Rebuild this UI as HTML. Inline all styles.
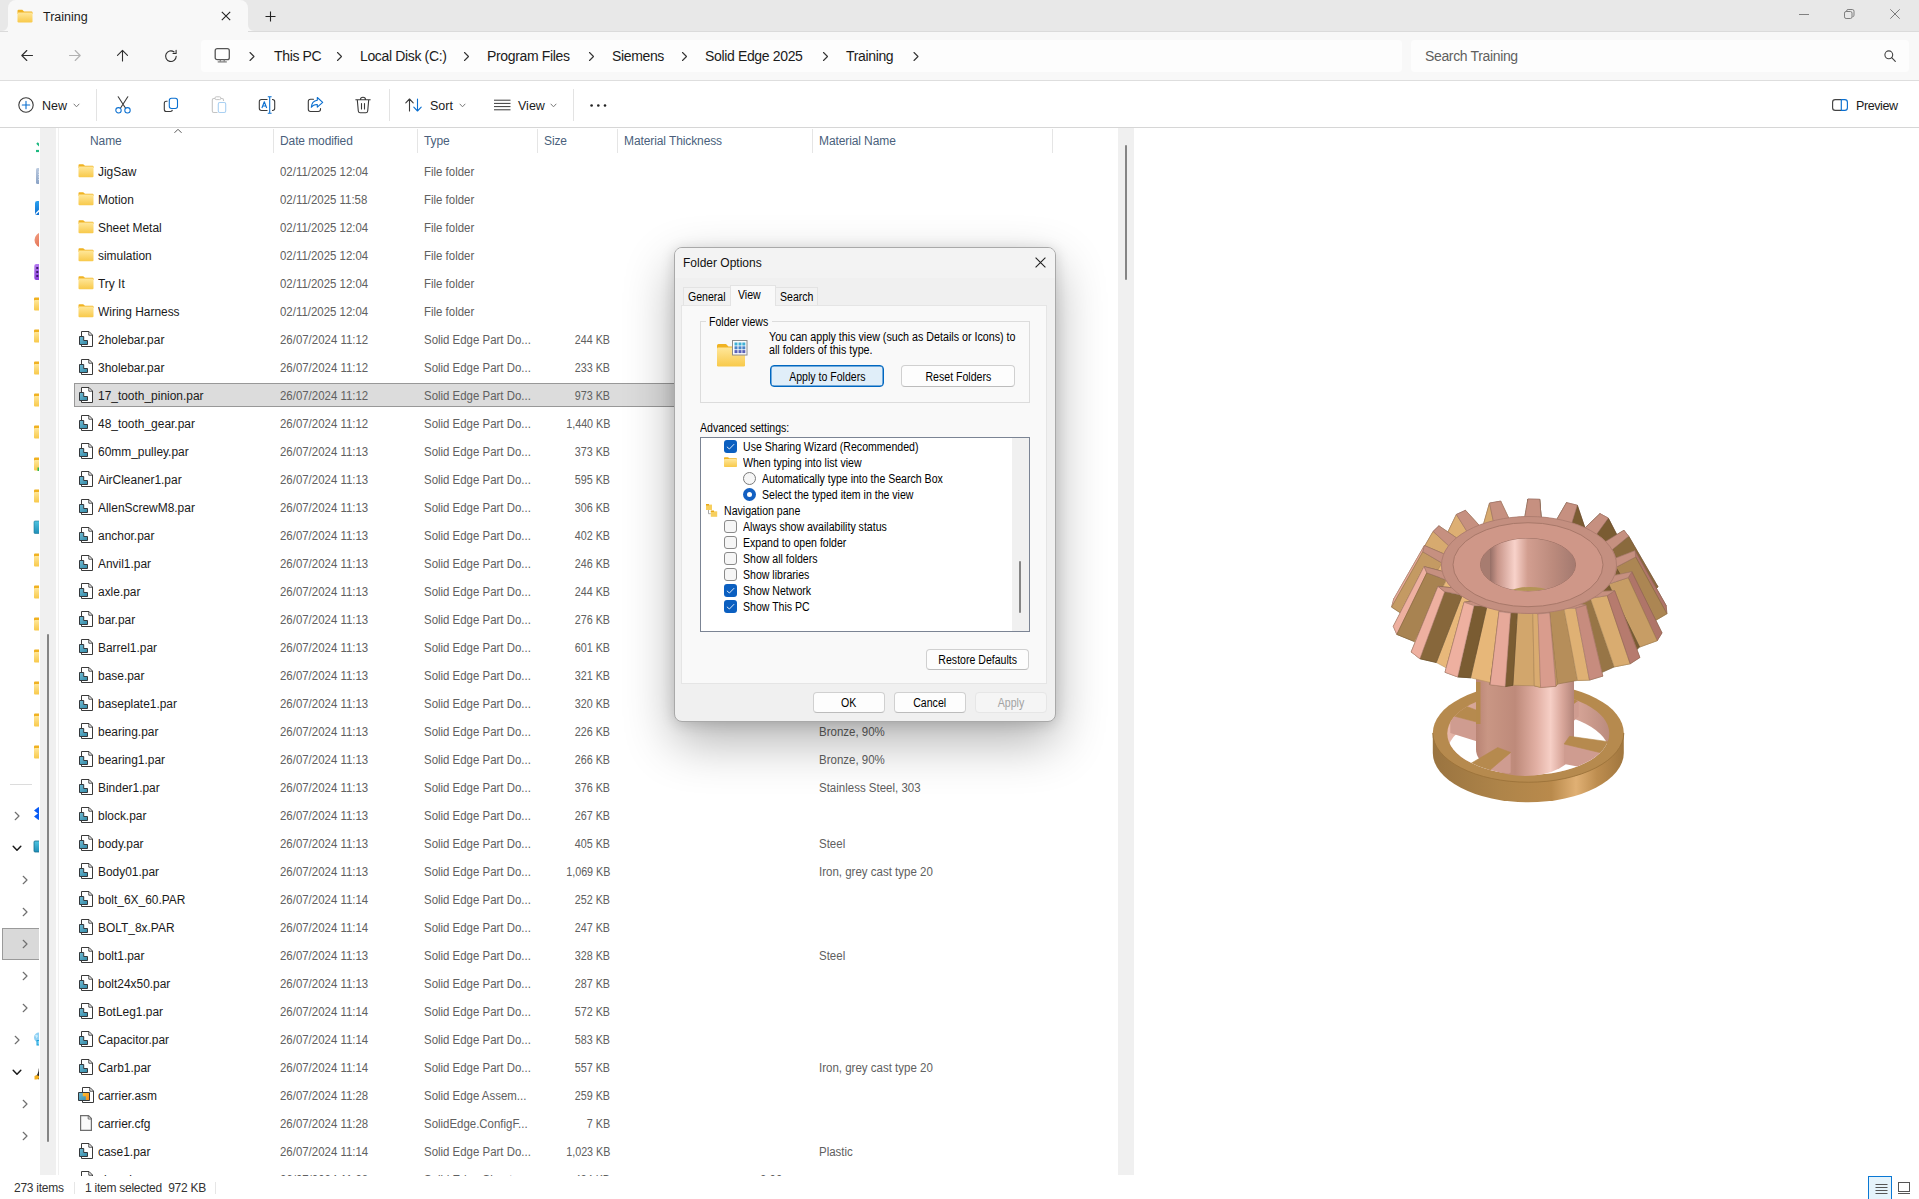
<!DOCTYPE html>
<html lang="en"><head><meta charset="utf-8"><title>Training - File Explorer</title>
<style>
*{box-sizing:border-box}
html,body{margin:0;padding:0}
body{width:1919px;height:1199px;position:relative;overflow:hidden;background:#fff;font-family:"Liberation Sans",sans-serif;font-size:12px;color:#1b1b1b;-webkit-font-smoothing:antialiased}
.abs{position:absolute}
svg{position:absolute;overflow:visible}
.t{position:absolute;white-space:pre;line-height:1}
/* title / tabs */
#titlebar{left:0;top:0;width:1919px;height:31px;background:#e8e8e8}
#tab{left:8px;top:0;width:240px;height:32px;background:#f8f8f8;border-radius:8px 8px 0 0}
#navrow{left:0;top:32px;width:1919px;height:49px;background:#f8f8f8;border-bottom:1px solid #dedede}
#addr{left:201px;top:40px;width:1201px;height:32px;background:#fdfdfd;border-radius:4px}
#search{left:1411px;top:40px;width:498px;height:32px;background:#fdfdfd;border-radius:4px}
#toolbar{left:0;top:81px;width:1919px;height:47px;background:#fff;border-bottom:1px solid #d6d6d6}
.bc{font-size:14px;color:#1b1b1b;top:49px;letter-spacing:-.35px}
.tb{font-size:12.5px;color:#1b1b1b;top:100px}
.vsep{position:absolute;width:1px;background:#e3e3e3;top:89px;height:32px}
/* nav pane */
#navpane{left:0;top:128px;width:39px;height:1047px;overflow:hidden;background:#fff}
#navtrack{left:40px;top:128px;width:16px;height:1047px;background:#f0f0f0}
#navthumb{left:47px;top:634px;width:2px;height:508px;background:#858585;border-radius:1px}
#navdiv{left:58px;top:128px;width:1px;height:1047px;background:#f0f0f0}
/* list */
#lhead{left:59px;top:128px;width:1059px;height:26px}
.h{position:absolute;top:6px;font-size:12px;color:#4a5f7c;white-space:pre;line-height:14px;letter-spacing:-.1px}
.hs{position:absolute;top:1px;width:1px;height:24px;background:#e5e5e5}
#list{position:absolute;left:59px;top:0;width:1059px;height:1176px;overflow:hidden}
.row{position:absolute;left:15px;width:980px;height:28px}
.row.sel:before{content:"";position:absolute;left:0;top:2px;width:980px;height:24px;box-sizing:border-box;background:#dcdcdc;border:1px solid #989898}
.row.sel{}
.ic{left:4px;top:6px;width:16px;height:16px}
.c{position:absolute;top:1px;line-height:28px;height:28px;white-space:pre;font-size:12.5px;transform-origin:0 50%}
.cn{left:24px;color:#1a1a1a;transform:scaleX(.955)}
.cd{left:206px;color:#606060;transform:scaleX(.915)}
.ct{left:350px;color:#606060;transform:scaleX(.915)}
.cs{right:444px;color:#606060;text-align:right;transform:scaleX(.86);transform-origin:100% 50%}
.cth{left:686px;color:#606060;transform:scaleX(.915)}
.cm{left:745px;color:#606060;transform:scaleX(.92)}
#ltrack{left:1118px;top:128px;width:16px;height:1047px;background:#f0f0f0}
#lthumb{left:1125px;top:145px;width:2px;height:135px;background:#858585;border-radius:1px}
/* status */
#status{left:0;top:1176px;width:1919px;height:23px;background:#fff}
.st{font-size:12px;color:#333;top:1182px;letter-spacing:-.25px}
/* dialog */
#dlg{left:674px;top:247px;width:382px;height:475px;background:#f0f0f0;border:1px solid #a9a9a9;border-radius:8px;box-shadow:0 20px 50px rgba(0,0,0,.30),0 2px 14px rgba(0,0,0,.15);font-size:11px;color:#000}
#dlg .t{font-size:12px;color:#000;letter-spacing:0;transform:scaleX(.88);transform-origin:0 0}
#dtitle{left:0;top:0;width:380px;height:30px;background:#f3f3f3;border-radius:7px 7px 0 0}
.dtab{position:absolute;background:#f2f2f2;border:1px solid #e3e3e3;border-bottom:none}
#dpage{left:6px;top:57px;width:366px;height:379px;background:#f9f9f9;border:1px solid #e5e5e5}
.btn{position:absolute;height:22px;background:#fdfdfd;border:1px solid #d0d0d0;border-bottom-color:#bcbcbc;border-radius:4px;text-align:center;line-height:20px;font-size:12px;color:#000;white-space:pre}.btn b{display:inline-block;font-weight:normal;transform:scaleX(.88);position:relative;top:.6px}
.cb{position:absolute;width:13px;height:13px;border-radius:3px}
.cb.on{background:#0b5fc0}
.cb.off{background:#f6f6f6;border:1px solid #8a8a8a}
.li{position:absolute;font-size:12px;line-height:16px;white-space:pre;color:#000;transform:scaleX(.88);transform-origin:0 0}
</style></head>
<body>
<svg width="0" height="0" style="left:-10px;top:-10px"><defs>
<linearGradient id="gfold" x1="0" y1="0" x2="0" y2="1"><stop offset="0" stop-color="#ffe79a"/><stop offset="1" stop-color="#f8c94a"/></linearGradient>
<linearGradient id="gteal" x1="0" y1="0" x2="1" y2="1"><stop offset="0" stop-color="#74bdd6"/><stop offset="1" stop-color="#2f87a4"/></linearGradient>
<symbol id="i-folder" viewBox="0 0 16 16"><path d="M0.5 2.2Q0.5 1.3 1.4 1.3H5.2L7 2.8H14.6Q15.5 2.8 15.5 3.7V5H0.5Z" fill="#f0b323"/><rect x="0.5" y="3.6" width="15" height="10.6" rx="1" fill="url(#gfold)"/></symbol>
<symbol id="i-par" viewBox="0 0 16 16"><path d="M3.500 .5H11L14.500 4V15.500H3.500Z" fill="#fff" stroke="#3a3a3a" stroke-width="1"/><path d="M10.800 .8V4.200H14.300" fill="none" stroke="#3a3a3a" stroke-width=".9"/><path d="M1.500 5.500H5.700V9.500H9.500V13.500H1.500Z" fill="url(#gteal)" stroke="#33383c" stroke-width="1"/></symbol>
<symbol id="i-asm" viewBox="0 0 16 16"><defs><linearGradient id="gor" x1="0" y1="0" x2="1" y2="1"><stop offset="0" stop-color="#ffc02e"/><stop offset="1" stop-color="#f58a1a"/></linearGradient></defs><path d="M4.500 .5H12L15.500 4V15.500H4.500Z" fill="#fff" stroke="#3a3a3a" stroke-width="1"/><path d="M11.800 .8V4.200H15.300" fill="none" stroke="#3a3a3a" stroke-width=".9"/><path d="M.5 5.500H11.500V13.500H.5Z" fill="url(#gteal)" stroke="#33383c" stroke-width="1"/><path d="M4.800 6H11V13H7.800V9.300H4.800Z" fill="url(#gor)"/></symbol>
<symbol id="i-file" viewBox="0 0 16 16"><path d="M2.600 .6H10.500L13.400 3.600V15.400H2.600Z" fill="#fafafa" stroke="#6e6e6e" stroke-width="1.200"/><path d="M10.200 1V4H13" fill="none" stroke="#6e6e6e" stroke-width="1"/></symbol>
</defs></svg>
<div id="titlebar" class="abs"></div>
<i class="abs" style="left:0;top:31px;width:1919px;height:1px;background:#dbdbdb"></i>
<div id="tab" class="abs"></div>
<svg style="left:2px;top:25px" width="6" height="6" viewBox="0 0 6 6"><path d="M6 0V6H0A6 6 0 0 0 6 0Z" fill="#f8f8f8"/></svg>
<svg style="left:248px;top:25px" width="6" height="6" viewBox="0 0 6 6"><path d="M0 0V6H6A6 6 0 0 1 0 0Z" fill="#f8f8f8"/></svg>
<div id="navrow" class="abs"></div>
<svg style="left:17px;top:9px" width="16" height="14" viewBox="0 0 16 14"><path d="M0.5 2Q0.5 .8 1.6 .8H5.3L7 2.4H14.4Q15.5 2.4 15.5 3.5V5H0.5Z" fill="#f0b323"/><rect x=".5" y="3.4" width="15" height="10" rx="1.2" fill="url(#gfold)"/></svg>
<span class="t" style="left:43px;top:11px;font-size:12.5px;color:#1b1b1b;letter-spacing:0">Training</span>
<svg style="left:221px;top:11px" width="10" height="10" viewBox="0 0 10 10"><path d="M.8 .8L9.2 9.2M9.2 .8L.8 9.2" stroke="#222" stroke-width="1.1" fill="none"/></svg>
<svg style="left:265px;top:11px" width="11" height="11" viewBox="0 0 11 11"><path d="M5.500 .5V10.500M.5 5.500H10.500" stroke="#222" stroke-width="1.1" fill="none"/></svg>
<!-- window controls -->
<svg style="left:1799px;top:14px" width="10" height="1" viewBox="0 0 10 1"><path d="M0 .5H10" stroke="#808080" stroke-width="1"/></svg>
<svg style="left:1844px;top:9px" width="11" height="10" viewBox="0 0 11 10"><rect x=".5" y="2.500" width="7.500" height="7" rx="1.600" fill="none" stroke="#7e7e7e"/><path d="M2.600 2.300V2Q2.600 .5 4.100 .5H8.300Q10 .5 10 2.200V6.200Q10 7.700 8.500 7.700" fill="none" stroke="#7e7e7e"/></svg>
<svg style="left:1890px;top:9px" width="10" height="10" viewBox="0 0 10 10"><path d="M.3 .3L9.700 9.700M9.700 .3L.3 9.700" stroke="#7a7a7a" stroke-width="1" fill="none"/></svg>
<!-- nav buttons -->
<svg style="left:21px;top:49px" width="13" height="13" viewBox="0 0 13 13"><path d="M11.500 6.500H1M5.800 1.500L.8 6.500L5.800 11.500" fill="none" stroke="#2e2e2e" stroke-width="1.100" stroke-linecap="round" stroke-linejoin="round"/></svg>
<svg style="left:69px;top:49px" width="13" height="13" viewBox="0 0 13 13"><path d="M.5 6.500H11M6.200 1.500L11.200 6.500L6.200 11.500" fill="none" stroke="#b2b2b2" stroke-width="1.100" stroke-linecap="round" stroke-linejoin="round"/></svg>
<svg style="left:116px;top:49px" width="13" height="13" viewBox="0 0 13 13"><path d="M6.500 12V1.500M1.500 6.300L6.500 1.300L11.500 6.300" fill="none" stroke="#2e2e2e" stroke-width="1.100" stroke-linecap="round" stroke-linejoin="round"/></svg>
<svg style="left:164px;top:49px" width="14" height="14" viewBox="-.5 -.5 14 14"><path d="M11.700 6.800A5.300 5.300 0 1 1 9.600 2.500" fill="none" stroke="#2e2e2e" stroke-width="1.100" stroke-linecap="round"/><path d="M11.600 .9V4H8.500" fill="none" stroke="#2e2e2e" stroke-width="1.100" stroke-linecap="round" stroke-linejoin="round"/></svg>
<div id="addr" class="abs"></div><div id="search" class="abs"></div>
<svg style="left:214px;top:48px" width="16" height="15" viewBox="-.5 0 16 15"><rect x=".7" y=".7" width="14.100" height="11" rx="2" fill="none" stroke="#555" stroke-width="1.300"/><path d="M5.800 11.700V13.500M9.700 11.700V13.500" stroke="#777" stroke-width="1.200"/><path d="M3.200 13.900H12.300" stroke="#777" stroke-width="1.200"/></svg>
<span class="t bc" style="left:274px">This PC</span><span class="t bc" style="left:360px">Local Disk (C:)</span><span class="t bc" style="left:487px">Program Files</span><span class="t bc" style="left:612px">Siemens</span><span class="t bc" style="left:705px">Solid Edge 2025</span><span class="t bc" style="left:846px">Training</span>
<svg style="left:0;top:0" width="1000" height="80"><g fill="none" stroke="#333" stroke-width="1.1" stroke-linecap="round" stroke-linejoin="round"><path d="M250.0 52.500L254.0 56.500L250.0 60.500"/><path d="M337.5 52.500L341.5 56.500L337.5 60.500"/><path d="M464.5 52.500L468.5 56.500L464.5 60.500"/><path d="M589.5 52.500L593.5 56.500L589.5 60.500"/><path d="M682.5 52.500L686.5 56.500L682.5 60.500"/><path d="M823.5 52.500L827.5 56.500L823.5 60.500"/><path d="M914.0 52.500L918.0 56.500L914.0 60.500"/></g></svg>
<span class="t" style="left:1425px;top:49px;font-size:14px;color:#5f5f5f;letter-spacing:-.35px">Search Training</span>
<svg style="left:1884px;top:50px" width="12" height="12" viewBox="0 0 12 12"><circle cx="4.8" cy="4.8" r="3.9" fill="none" stroke="#444" stroke-width="1.1"/><path d="M7.7 7.7L11.3 11.3" stroke="#444" stroke-width="1.2" stroke-linecap="round"/></svg>
<!-- toolbar -->
<div id="toolbar" class="abs"></div>
<svg style="left:18px;top:97px" width="16" height="16" viewBox="0 0 16 16"><circle cx="8" cy="8" r="7.2" fill="none" stroke="#3a3a3a" stroke-width="1.1"/><path d="M8 4.3V11.7M4.3 8H11.700" stroke="#0a6fd0" stroke-width="1.1" stroke-linecap="round"/></svg>
<span class="t tb" style="left:42px">New</span>
<svg style="left:73px;top:103px" width="7" height="5" viewBox="0 0 7 5"><path d="M.7 .8L3.500 3.800L6.300 .8" fill="none" stroke="#7a7a7a" stroke-width="1"/></svg>
<i class="vsep" style="left:96px"></i>
<!-- cut -->
<svg style="left:115px;top:96px" width="16" height="18" viewBox="0 0 16 18"><path d="M3.200 .8L10.600 12.200M12.800 .8L5.400 12.200" stroke="#3a3a3a" stroke-width="1.1" stroke-linecap="round" fill="none"/><circle cx="3.500" cy="14.300" r="2.700" fill="none" stroke="#0a6fd0" stroke-width="1.050"/><circle cx="12.500" cy="14.300" r="2.700" fill="none" stroke="#0a6fd0" stroke-width="1.050"/></svg>
<!-- copy -->
<svg style="left:163px;top:97px" width="16" height="16" viewBox="0 0 16 16"><path d="M4.500 4.300H3.300Q1.300 4.300 1.300 6.300V12.500Q1.300 14.500 3.300 14.500H7.500Q9.200 14.500 9.400 12.900" fill="none" stroke="#3a3a3a" stroke-width="1.1"/><rect x="6.300" y="1.300" width="8.200" height="10.200" rx="2.200" fill="none" stroke="#0a6fd0" stroke-width="1.1"/></svg>
<!-- paste (disabled) -->
<svg style="left:211px;top:96px" width="16" height="18" viewBox="0 0 16 18"><path d="M6.500 16.500H2.800Q1.300 16.500 1.300 15V4Q1.300 2.500 2.800 2.500H11Q12.500 2.500 12.500 4V5" fill="none" stroke="#c4c4c4" stroke-width="1.1"/><rect x="4" y=".8" width="5.800" height="2.800" rx="1.200" fill="#fff" stroke="#c4c4c4" stroke-width="1"/><rect x="7.300" y="6.500" width="7.400" height="10" rx="1.500" fill="none" stroke="#a9d0f2" stroke-width="1.1"/></svg>
<!-- rename -->
<svg style="left:258px;top:96px" width="18" height="18" viewBox="0 0 18 18"><path d="M9.500 3.500H3.500Q1.300 3.500 1.300 5.700V12.300Q1.300 14.500 3.500 14.500H9.500M14 3.500H14.500Q16.700 3.500 16.700 5.700V12.300Q16.700 14.500 14.500 14.500H14" fill="none" stroke="#3a3a3a" stroke-width="1.1"/><path d="M11.700 1V17M9.800 .8H13.600M9.800 17.200H13.600" stroke="#0a6fd0" stroke-width="1.1" fill="none"/><path d="M3.900 12L6.300 5.800L8.700 12M4.700 10H7.900" stroke="#0a6fd0" stroke-width="1.1" fill="none" stroke-linejoin="round"/></svg>
<!-- share -->
<svg style="left:307px;top:96px" width="17" height="18" viewBox="0 0 17 18"><path d="M6.500 3.300H3.500Q1.300 3.300 1.300 5.500V13.300Q1.300 15.500 3.500 15.500H11.300Q13.500 15.500 13.500 13.300V12.500" fill="none" stroke="#3a3a3a" stroke-width="1.1" stroke-linecap="round"/><path d="M10.300 1.500L15.700 6.300L10.300 11.100V8.500Q6.300 8.300 4.300 11.300Q4.700 5 10.300 4.300Z" fill="none" stroke="#0a6fd0" stroke-width="1.1" stroke-linejoin="round"/></svg>
<!-- delete -->
<svg style="left:355px;top:96px" width="16" height="18" viewBox="0 0 16 18"><path d="M.8 3.800H15.200M5.500 3.500Q5.500 1.200 8 1.200Q10.500 1.200 10.500 3.500M2.300 4L3.300 15Q3.500 16.700 5.200 16.700H10.800Q12.500 16.700 12.700 15L13.700 4M6.500 7.500V13M9.500 7.500V13" fill="none" stroke="#3a3a3a" stroke-width="1.1" stroke-linecap="round"/></svg>
<i class="vsep" style="left:389px"></i>
<!-- sort -->
<svg style="left:405px;top:98px" width="18" height="14" viewBox="0 0 18 14"><path d="M4.500 13V1.200M.8 4.800L4.500 1L8.200 4.800" fill="none" stroke="#3a3a3a" stroke-width="1.1" stroke-linecap="round" stroke-linejoin="round"/><path d="M12.500 1V12.800M8.800 9.200L12.500 13L16.200 9.200" fill="none" stroke="#0a6fd0" stroke-width="1.1" stroke-linecap="round" stroke-linejoin="round"/></svg>
<span class="t tb" style="left:430px">Sort</span>
<svg style="left:459px;top:103px" width="7" height="5" viewBox="0 0 7 5"><path d="M.7 .8L3.500 3.800L6.300 .8" fill="none" stroke="#7a7a7a" stroke-width="1"/></svg>
<!-- view -->
<svg style="left:494px;top:99px" width="17" height="12" viewBox="0 0 17 12"><path d="M0 1.200H16.500M0 4.400H16.500M0 7.600H16.500M0 10.800H16.500" stroke="#3a3a3a" stroke-width="1"/></svg>
<span class="t tb" style="left:518px">View</span>
<svg style="left:550px;top:103px" width="7" height="5" viewBox="0 0 7 5"><path d="M.7 .8L3.500 3.800L6.300 .8" fill="none" stroke="#7a7a7a" stroke-width="1"/></svg>
<i class="vsep" style="left:573px"></i>
<svg style="left:590px;top:104px" width="17" height="3" viewBox="0 0 17 3"><circle cx="1.600" cy="1.500" r="1.300" fill="#222"/><circle cx="8.300" cy="1.500" r="1.300" fill="#222"/><circle cx="15" cy="1.500" r="1.300" fill="#222"/></svg>
<!-- preview -->
<svg style="left:1832px;top:99px" width="16" height="12" viewBox="0 0 16 12"><path d="M9 .6H3.200Q.6 .6 .6 3.200V8.800Q.6 11.400 3.200 11.400H9" fill="none" stroke="#444" stroke-width="1.150"/><path d="M9.300 .6H12.800Q15.400 .6 15.400 3.200V8.800Q15.400 11.400 12.800 11.400H9.300Z" fill="none" stroke="#0a6fd0" stroke-width="1.150"/></svg>
<span class="t tb" style="left:1856px;letter-spacing:-.4px">Preview</span>
<div id="navpane" class="abs">
<svg style="left:34px;top:8px" width="16" height="16" viewBox="0 0 16 16"><path d="M3 7L8 12L13 7M8 1V12" fill="none" stroke="#1eb980" stroke-width="2.200"/><path d="M2 15H14" stroke="#1eb980" stroke-width="2.200"/></svg>
<svg style="left:34px;top:40px" width="16" height="16" viewBox="0 0 16 16"><defs><linearGradient id="gdoc" x1="0" y1="0" x2="0" y2="1"><stop offset="0" stop-color="#bccbe0"/><stop offset="1" stop-color="#8aa3c6"/></linearGradient></defs><rect x="2" y="0" width="12" height="16" rx="1.500" fill="url(#gdoc)"/><path d="M4.500 4H11.500M4.500 6.500H11.500M4.500 9H11.500M4.500 11.500H9" stroke="#fff" stroke-width="1"/></svg>
<svg style="left:34px;top:72px" width="16" height="16" viewBox="0 0 16 16"><defs><linearGradient id="gpic" x1="0" y1="0" x2="0" y2="1"><stop offset="0" stop-color="#2aa0ee"/><stop offset="1" stop-color="#0f6fd0"/></linearGradient></defs><rect x="1" y="1" width="14" height="14" rx="2.200" fill="url(#gpic)"/><path d="M1.800 13.800L6 9.800Q8 8.200 10 9.800L14.200 13.800" fill="none" stroke="#fff" stroke-width="1.300"/></svg>
<svg style="left:34px;top:104px" width="16" height="16" viewBox="0 0 16 16"><defs><linearGradient id="gmus" x1="0" y1="0" x2="1" y2="1"><stop offset="0" stop-color="#f2a184"/><stop offset="1" stop-color="#dd5a3c"/></linearGradient></defs><circle cx="8" cy="8" r="7.500" fill="url(#gmus)"/></svg>
<svg style="left:34px;top:136px" width="16" height="16" viewBox="0 0 16 16"><defs><linearGradient id="gvid" x1="0" y1="0" x2="0" y2="1"><stop offset="0" stop-color="#b57af0"/><stop offset="1" stop-color="#8a3fd8"/></linearGradient></defs><rect x=".3" y="0" width="15.400" height="16" rx="2" fill="url(#gvid)"/><g fill="#3a1a6a"><rect x="2.300" y="3" width="2" height="2"/><rect x="2.300" y="7" width="2" height="2"/><rect x="2.300" y="11" width="2" height="2"/></g></svg>
<svg style="left:34px;top:168px" width="16" height="16" viewBox="0 0 16 16"><path d="M0 2.500Q0 1.500 1 1.500H5L6.800 3H15Q16 3 16 4V5H0Z" fill="#f0b120"/><rect x="0" y="4" width="16" height="10.500" rx="1" fill="url(#gfold)"/></svg>
<svg style="left:34px;top:200px" width="16" height="16" viewBox="0 0 16 16"><path d="M0 2.500Q0 1.500 1 1.500H5L6.800 3H15Q16 3 16 4V5H0Z" fill="#f0b120"/><rect x="0" y="4" width="16" height="10.500" rx="1" fill="url(#gfold)"/></svg>
<svg style="left:34px;top:232px" width="16" height="16" viewBox="0 0 16 16"><path d="M0 2.500Q0 1.500 1 1.500H5L6.800 3H15Q16 3 16 4V5H0Z" fill="#f0b120"/><rect x="0" y="4" width="16" height="10.500" rx="1" fill="url(#gfold)"/></svg>
<svg style="left:34px;top:264px" width="16" height="16" viewBox="0 0 16 16"><path d="M0 2.500Q0 1.500 1 1.500H5L6.800 3H15Q16 3 16 4V5H0Z" fill="#f0b120"/><rect x="0" y="4" width="16" height="10.500" rx="1" fill="url(#gfold)"/></svg>
<svg style="left:34px;top:296px" width="16" height="16" viewBox="0 0 16 16"><path d="M0 2.500Q0 1.500 1 1.500H5L6.800 3H15Q16 3 16 4V5H0Z" fill="#f0b120"/><rect x="0" y="4" width="16" height="10.500" rx="1" fill="url(#gfold)"/></svg>
<svg style="left:34px;top:328px" width="16" height="16" viewBox="0 0 16 16"><path d="M0 2.500Q0 1.500 1 1.500H5L6.800 3H15Q16 3 16 4V5H0Z" fill="#f0b120"/><rect x="0" y="4" width="16" height="10.500" rx="1" fill="url(#gfold)"/><rect x="3.500" y="11.500" width="4" height="3.500" fill="#2db84d"/></svg>
<svg style="left:34px;top:360px" width="16" height="16" viewBox="0 0 16 16"><path d="M0 2.500Q0 1.500 1 1.500H5L6.800 3H15Q16 3 16 4V5H0Z" fill="#f0b120"/><rect x="0" y="4" width="16" height="10.500" rx="1" fill="url(#gfold)"/></svg>
<svg style="left:34px;top:392px" width="16" height="16" viewBox="0 0 16 16"><defs><linearGradient id="gtl" x1="0" y1="0" x2="0" y2="1"><stop offset="0" stop-color="#4fc3e0"/><stop offset="1" stop-color="#1f8fb8"/></linearGradient></defs><rect x="0" y="1" width="16" height="12.500" rx="1" fill="url(#gtl)" stroke="#1a7a9a" stroke-width=".6"/></svg>
<svg style="left:34px;top:424px" width="16" height="16" viewBox="0 0 16 16"><path d="M0 2.500Q0 1.500 1 1.500H5L6.800 3H15Q16 3 16 4V5H0Z" fill="#f0b120"/><rect x="0" y="4" width="16" height="10.500" rx="1" fill="url(#gfold)"/></svg>
<svg style="left:34px;top:456px" width="16" height="16" viewBox="0 0 16 16"><path d="M0 2.500Q0 1.500 1 1.500H5L6.800 3H15Q16 3 16 4V5H0Z" fill="#f0b120"/><rect x="0" y="4" width="16" height="10.500" rx="1" fill="url(#gfold)"/></svg>
<svg style="left:34px;top:488px" width="16" height="16" viewBox="0 0 16 16"><path d="M0 2.500Q0 1.500 1 1.500H5L6.800 3H15Q16 3 16 4V5H0Z" fill="#f0b120"/><rect x="0" y="4" width="16" height="10.500" rx="1" fill="url(#gfold)"/></svg>
<svg style="left:34px;top:520px" width="16" height="16" viewBox="0 0 16 16"><path d="M0 2.500Q0 1.500 1 1.500H5L6.800 3H15Q16 3 16 4V5H0Z" fill="#f0b120"/><rect x="0" y="4" width="16" height="10.500" rx="1" fill="url(#gfold)"/></svg>
<svg style="left:34px;top:552px" width="16" height="16" viewBox="0 0 16 16"><path d="M0 2.500Q0 1.500 1 1.500H5L6.800 3H15Q16 3 16 4V5H0Z" fill="#f0b120"/><rect x="0" y="4" width="16" height="10.500" rx="1" fill="url(#gfold)"/></svg>
<svg style="left:34px;top:584px" width="16" height="16" viewBox="0 0 16 16"><path d="M0 2.500Q0 1.500 1 1.500H5L6.800 3H15Q16 3 16 4V5H0Z" fill="#f0b120"/><rect x="0" y="4" width="16" height="10.500" rx="1" fill="url(#gfold)"/></svg>
<svg style="left:34px;top:616px" width="16" height="16" viewBox="0 0 16 16"><path d="M0 2.500Q0 1.500 1 1.500H5L6.800 3H15Q16 3 16 4V5H0Z" fill="#f0b120"/><rect x="0" y="4" width="16" height="10.500" rx="1" fill="url(#gfold)"/></svg>
<i class="abs" style="left:10px;top:656px;width:22px;height:1px;background:#dcdcdc"></i>
<div class="abs" style="left:2px;top:800px;width:40px;height:32px;background:#d9d9d9;border:1px solid #9a9a9a"></div>
<svg style="left:14px;top:683px" width="7" height="10" viewBox="0 0 7 10"><path d="M1.200 1.300L5 5L1.200 8.700" fill="none" stroke="#707070" stroke-width="1.200" stroke-linecap="round" stroke-linejoin="round"/></svg>
<svg style="left:34px;top:679px" width="16" height="16" viewBox="0 0 16 16"><path d="M0 3.500L4.500 0L9 3.500L4.500 7ZM0 9.500L4.500 6L9 9.500L4.500 13Z" fill="#0a5cf5"/></svg>
<svg style="left:11.5px;top:717px" width="10" height="7" viewBox="0 0 10 7"><path d="M1.200 1.300L5 5.200L8.800 1.300" fill="none" stroke="#1a1a1a" stroke-width="1.500" stroke-linecap="round" stroke-linejoin="round"/></svg>
<svg style="left:34px;top:711px" width="16" height="16" viewBox="0 0 16 16"><rect x="0" y="2" width="16" height="11" rx="1" fill="url(#gtl)" stroke="#176f8f" stroke-width=".8"/></svg>
<svg style="left:22px;top:747px" width="7" height="10" viewBox="0 0 7 10"><path d="M1.200 1.300L5 5L1.200 8.700" fill="none" stroke="#707070" stroke-width="1.200" stroke-linecap="round" stroke-linejoin="round"/></svg>
<svg style="left:22px;top:779px" width="7" height="10" viewBox="0 0 7 10"><path d="M1.200 1.300L5 5L1.200 8.700" fill="none" stroke="#707070" stroke-width="1.200" stroke-linecap="round" stroke-linejoin="round"/></svg>
<svg style="left:22px;top:811px" width="7" height="10" viewBox="0 0 7 10"><path d="M1.200 1.300L5 5L1.200 8.700" fill="none" stroke="#707070" stroke-width="1.200" stroke-linecap="round" stroke-linejoin="round"/></svg>
<svg style="left:22px;top:843px" width="7" height="10" viewBox="0 0 7 10"><path d="M1.200 1.300L5 5L1.200 8.700" fill="none" stroke="#707070" stroke-width="1.200" stroke-linecap="round" stroke-linejoin="round"/></svg>
<svg style="left:22px;top:875px" width="7" height="10" viewBox="0 0 7 10"><path d="M1.200 1.300L5 5L1.200 8.700" fill="none" stroke="#707070" stroke-width="1.200" stroke-linecap="round" stroke-linejoin="round"/></svg>
<svg style="left:22px;top:971px" width="7" height="10" viewBox="0 0 7 10"><path d="M1.200 1.300L5 5L1.200 8.700" fill="none" stroke="#707070" stroke-width="1.200" stroke-linecap="round" stroke-linejoin="round"/></svg>
<svg style="left:22px;top:1003px" width="7" height="10" viewBox="0 0 7 10"><path d="M1.200 1.300L5 5L1.200 8.700" fill="none" stroke="#707070" stroke-width="1.200" stroke-linecap="round" stroke-linejoin="round"/></svg>
<svg style="left:14px;top:907px" width="7" height="10" viewBox="0 0 7 10"><path d="M1.200 1.300L5 5L1.200 8.700" fill="none" stroke="#707070" stroke-width="1.200" stroke-linecap="round" stroke-linejoin="round"/></svg>
<svg style="left:34px;top:904px" width="16" height="16" viewBox="0 0 16 16"><circle cx="5" cy="5.500" r="5" fill="#8fd0f4"/><path d="M1 3Q3 2 4 4L2.500 6.500Z" fill="#c8ecfb"/><rect x="2.500" y="8" width="10" height="5.500" fill="#1a9fd8"/><rect x="3.500" y="9" width="8" height="3.500" fill="#7fd4f5"/></svg>
<svg style="left:11.5px;top:941px" width="10" height="7" viewBox="0 0 10 7"><path d="M1.200 1.300L5 5.200L8.800 1.300" fill="none" stroke="#1a1a1a" stroke-width="1.500" stroke-linecap="round" stroke-linejoin="round"/></svg>
<svg style="left:34px;top:936px" width="16" height="16" viewBox="0 0 16 16"><path d="M8 2Q4.500 2 4.500 7Q4 10 1.500 13Q4 16 8 16Z" fill="#2a2a2a"/><path d="M.5 12Q3 10.500 5.500 12.500Q5.500 16 .5 15.500Z" fill="#f4b020"/></svg>
</div>
<div id="navtrack" class="abs"></div><div id="navthumb" class="abs"></div><div id="navdiv" class="abs"></div>
<div id="lhead" class="abs">
<span class="h" style="left:31px">Name</span><span class="h" style="left:221px">Date modified</span><span class="h" style="left:365px">Type</span><span class="h" style="left:485px">Size</span><span class="h" style="left:565px">Material Thickness</span><span class="h" style="left:760px">Material Name</span>
<i class="hs" style="left:214px"></i><i class="hs" style="left:358px"></i><i class="hs" style="left:478px"></i><i class="hs" style="left:558px"></i><i class="hs" style="left:753px"></i><i class="hs" style="left:993px"></i>
<svg style="left:114px;top:0" width="10" height="6" viewBox="0 0 10 6"><path d="M1.5 4.8L5 1.3L8.5 4.8" fill="none" stroke="#555" stroke-width="1"/></svg>
</div>
<div id="ltrack" class="abs"></div><div id="lthumb" class="abs"></div>
<div id="list">
<div class="row" style="top:157px"><svg class="ic" viewBox="0 0 16 16"><use href="#i-folder"/></svg><span class="c cn">JigSaw</span><span class="c cd">02/11/2025 12:04</span><span class="c ct">File folder</span><span class="c cs"></span><span class="c cm"></span></div>
<div class="row" style="top:185px"><svg class="ic" viewBox="0 0 16 16"><use href="#i-folder"/></svg><span class="c cn">Motion</span><span class="c cd">02/11/2025 11:58</span><span class="c ct">File folder</span><span class="c cs"></span><span class="c cm"></span></div>
<div class="row" style="top:213px"><svg class="ic" viewBox="0 0 16 16"><use href="#i-folder"/></svg><span class="c cn">Sheet Metal</span><span class="c cd">02/11/2025 12:04</span><span class="c ct">File folder</span><span class="c cs"></span><span class="c cm"></span></div>
<div class="row" style="top:241px"><svg class="ic" viewBox="0 0 16 16"><use href="#i-folder"/></svg><span class="c cn">simulation</span><span class="c cd">02/11/2025 12:04</span><span class="c ct">File folder</span><span class="c cs"></span><span class="c cm"></span></div>
<div class="row" style="top:269px"><svg class="ic" viewBox="0 0 16 16"><use href="#i-folder"/></svg><span class="c cn">Try It</span><span class="c cd">02/11/2025 12:04</span><span class="c ct">File folder</span><span class="c cs"></span><span class="c cm"></span></div>
<div class="row" style="top:297px"><svg class="ic" viewBox="0 0 16 16"><use href="#i-folder"/></svg><span class="c cn">Wiring Harness</span><span class="c cd">02/11/2025 12:04</span><span class="c ct">File folder</span><span class="c cs"></span><span class="c cm"></span></div>
<div class="row" style="top:325px"><svg class="ic" viewBox="0 0 16 16"><use href="#i-par"/></svg><span class="c cn">2holebar.par</span><span class="c cd">26/07/2024 11:12</span><span class="c ct">Solid Edge Part Do...</span><span class="c cs">244 KB</span><span class="c cm"></span></div>
<div class="row" style="top:353px"><svg class="ic" viewBox="0 0 16 16"><use href="#i-par"/></svg><span class="c cn">3holebar.par</span><span class="c cd">26/07/2024 11:12</span><span class="c ct">Solid Edge Part Do...</span><span class="c cs">233 KB</span><span class="c cm"></span></div>
<div class="row sel" style="top:381px"><svg class="ic" viewBox="0 0 16 16"><use href="#i-par"/></svg><span class="c cn">17_tooth_pinion.par</span><span class="c cd">26/07/2024 11:12</span><span class="c ct">Solid Edge Part Do...</span><span class="c cs">973 KB</span><span class="c cm"></span></div>
<div class="row" style="top:409px"><svg class="ic" viewBox="0 0 16 16"><use href="#i-par"/></svg><span class="c cn">48_tooth_gear.par</span><span class="c cd">26/07/2024 11:12</span><span class="c ct">Solid Edge Part Do...</span><span class="c cs">1,440 KB</span><span class="c cm"></span></div>
<div class="row" style="top:437px"><svg class="ic" viewBox="0 0 16 16"><use href="#i-par"/></svg><span class="c cn">60mm_pulley.par</span><span class="c cd">26/07/2024 11:13</span><span class="c ct">Solid Edge Part Do...</span><span class="c cs">373 KB</span><span class="c cm"></span></div>
<div class="row" style="top:465px"><svg class="ic" viewBox="0 0 16 16"><use href="#i-par"/></svg><span class="c cn">AirCleaner1.par</span><span class="c cd">26/07/2024 11:13</span><span class="c ct">Solid Edge Part Do...</span><span class="c cs">595 KB</span><span class="c cm"></span></div>
<div class="row" style="top:493px"><svg class="ic" viewBox="0 0 16 16"><use href="#i-par"/></svg><span class="c cn">AllenScrewM8.par</span><span class="c cd">26/07/2024 11:13</span><span class="c ct">Solid Edge Part Do...</span><span class="c cs">306 KB</span><span class="c cm"></span></div>
<div class="row" style="top:521px"><svg class="ic" viewBox="0 0 16 16"><use href="#i-par"/></svg><span class="c cn">anchor.par</span><span class="c cd">26/07/2024 11:13</span><span class="c ct">Solid Edge Part Do...</span><span class="c cs">402 KB</span><span class="c cm"></span></div>
<div class="row" style="top:549px"><svg class="ic" viewBox="0 0 16 16"><use href="#i-par"/></svg><span class="c cn">Anvil1.par</span><span class="c cd">26/07/2024 11:13</span><span class="c ct">Solid Edge Part Do...</span><span class="c cs">246 KB</span><span class="c cm"></span></div>
<div class="row" style="top:577px"><svg class="ic" viewBox="0 0 16 16"><use href="#i-par"/></svg><span class="c cn">axle.par</span><span class="c cd">26/07/2024 11:13</span><span class="c ct">Solid Edge Part Do...</span><span class="c cs">244 KB</span><span class="c cm"></span></div>
<div class="row" style="top:605px"><svg class="ic" viewBox="0 0 16 16"><use href="#i-par"/></svg><span class="c cn">bar.par</span><span class="c cd">26/07/2024 11:13</span><span class="c ct">Solid Edge Part Do...</span><span class="c cs">276 KB</span><span class="c cm"></span></div>
<div class="row" style="top:633px"><svg class="ic" viewBox="0 0 16 16"><use href="#i-par"/></svg><span class="c cn">Barrel1.par</span><span class="c cd">26/07/2024 11:13</span><span class="c ct">Solid Edge Part Do...</span><span class="c cs">601 KB</span><span class="c cm"></span></div>
<div class="row" style="top:661px"><svg class="ic" viewBox="0 0 16 16"><use href="#i-par"/></svg><span class="c cn">base.par</span><span class="c cd">26/07/2024 11:13</span><span class="c ct">Solid Edge Part Do...</span><span class="c cs">321 KB</span><span class="c cm"></span></div>
<div class="row" style="top:689px"><svg class="ic" viewBox="0 0 16 16"><use href="#i-par"/></svg><span class="c cn">baseplate1.par</span><span class="c cd">26/07/2024 11:13</span><span class="c ct">Solid Edge Part Do...</span><span class="c cs">320 KB</span><span class="c cm"></span></div>
<div class="row" style="top:717px"><svg class="ic" viewBox="0 0 16 16"><use href="#i-par"/></svg><span class="c cn">bearing.par</span><span class="c cd">26/07/2024 11:13</span><span class="c ct">Solid Edge Part Do...</span><span class="c cs">226 KB</span><span class="c cm">Bronze, 90%</span></div>
<div class="row" style="top:745px"><svg class="ic" viewBox="0 0 16 16"><use href="#i-par"/></svg><span class="c cn">bearing1.par</span><span class="c cd">26/07/2024 11:13</span><span class="c ct">Solid Edge Part Do...</span><span class="c cs">266 KB</span><span class="c cm">Bronze, 90%</span></div>
<div class="row" style="top:773px"><svg class="ic" viewBox="0 0 16 16"><use href="#i-par"/></svg><span class="c cn">Binder1.par</span><span class="c cd">26/07/2024 11:13</span><span class="c ct">Solid Edge Part Do...</span><span class="c cs">376 KB</span><span class="c cm">Stainless Steel, 303</span></div>
<div class="row" style="top:801px"><svg class="ic" viewBox="0 0 16 16"><use href="#i-par"/></svg><span class="c cn">block.par</span><span class="c cd">26/07/2024 11:13</span><span class="c ct">Solid Edge Part Do...</span><span class="c cs">267 KB</span><span class="c cm"></span></div>
<div class="row" style="top:829px"><svg class="ic" viewBox="0 0 16 16"><use href="#i-par"/></svg><span class="c cn">body.par</span><span class="c cd">26/07/2024 11:13</span><span class="c ct">Solid Edge Part Do...</span><span class="c cs">405 KB</span><span class="c cm">Steel</span></div>
<div class="row" style="top:857px"><svg class="ic" viewBox="0 0 16 16"><use href="#i-par"/></svg><span class="c cn">Body01.par</span><span class="c cd">26/07/2024 11:13</span><span class="c ct">Solid Edge Part Do...</span><span class="c cs">1,069 KB</span><span class="c cm">Iron, grey cast type 20</span></div>
<div class="row" style="top:885px"><svg class="ic" viewBox="0 0 16 16"><use href="#i-par"/></svg><span class="c cn">bolt_6X_60.PAR</span><span class="c cd">26/07/2024 11:14</span><span class="c ct">Solid Edge Part Do...</span><span class="c cs">252 KB</span><span class="c cm"></span></div>
<div class="row" style="top:913px"><svg class="ic" viewBox="0 0 16 16"><use href="#i-par"/></svg><span class="c cn">BOLT_8x.PAR</span><span class="c cd">26/07/2024 11:14</span><span class="c ct">Solid Edge Part Do...</span><span class="c cs">247 KB</span><span class="c cm"></span></div>
<div class="row" style="top:941px"><svg class="ic" viewBox="0 0 16 16"><use href="#i-par"/></svg><span class="c cn">bolt1.par</span><span class="c cd">26/07/2024 11:13</span><span class="c ct">Solid Edge Part Do...</span><span class="c cs">328 KB</span><span class="c cm">Steel</span></div>
<div class="row" style="top:969px"><svg class="ic" viewBox="0 0 16 16"><use href="#i-par"/></svg><span class="c cn">bolt24x50.par</span><span class="c cd">26/07/2024 11:13</span><span class="c ct">Solid Edge Part Do...</span><span class="c cs">287 KB</span><span class="c cm"></span></div>
<div class="row" style="top:997px"><svg class="ic" viewBox="0 0 16 16"><use href="#i-par"/></svg><span class="c cn">BotLeg1.par</span><span class="c cd">26/07/2024 11:14</span><span class="c ct">Solid Edge Part Do...</span><span class="c cs">572 KB</span><span class="c cm"></span></div>
<div class="row" style="top:1025px"><svg class="ic" viewBox="0 0 16 16"><use href="#i-par"/></svg><span class="c cn">Capacitor.par</span><span class="c cd">26/07/2024 11:14</span><span class="c ct">Solid Edge Part Do...</span><span class="c cs">583 KB</span><span class="c cm"></span></div>
<div class="row" style="top:1053px"><svg class="ic" viewBox="0 0 16 16"><use href="#i-par"/></svg><span class="c cn">Carb1.par</span><span class="c cd">26/07/2024 11:14</span><span class="c ct">Solid Edge Part Do...</span><span class="c cs">557 KB</span><span class="c cm">Iron, grey cast type 20</span></div>
<div class="row" style="top:1081px"><svg class="ic" viewBox="0 0 16 16"><use href="#i-asm"/></svg><span class="c cn">carrier.asm</span><span class="c cd">26/07/2024 11:28</span><span class="c ct">Solid Edge Assem...</span><span class="c cs">259 KB</span><span class="c cm"></span></div>
<div class="row" style="top:1109px"><svg class="ic" viewBox="0 0 16 16"><use href="#i-file"/></svg><span class="c cn">carrier.cfg</span><span class="c cd">26/07/2024 11:28</span><span class="c ct">SolidEdge.ConfigF...</span><span class="c cs">7 KB</span><span class="c cm"></span></div>
<div class="row" style="top:1137px"><svg class="ic" viewBox="0 0 16 16"><use href="#i-par"/></svg><span class="c cn">case1.par</span><span class="c cd">26/07/2024 11:14</span><span class="c ct">Solid Edge Part Do...</span><span class="c cs">1,023 KB</span><span class="c cm">Plastic</span></div>
<div class="row" style="top:1165px"><svg class="ic" viewBox="0 0 16 16"><use href="#i-par"/></svg><span class="c cn">chassis.psm</span><span class="c cd">26/07/2024 11:28</span><span class="c ct">Solid Edge Sheet...</span><span class="c cs">434 KB</span><span class="c cth">2.00 mm</span><span class="c cm"></span></div>
</div>
<svg id="gear" style="left:0;top:0" width="1919" height="1199" viewBox="0 0 1919 1199">
<defs>
<linearGradient id="gshaft" x1="0" y1="0" x2="1" y2="0"><stop offset="0" stop-color="#b98474"/><stop offset=".12" stop-color="#c99684"/><stop offset=".4" stop-color="#be8a7a"/><stop offset=".62" stop-color="#e2b0a4"/><stop offset=".76" stop-color="#f6cfc6"/><stop offset=".88" stop-color="#d9a79b"/><stop offset="1" stop-color="#b4857a"/></linearGradient>
<linearGradient id="ghole" x1="0" y1="0" x2="1" y2="0"><stop offset="0" stop-color="#8f6a62"/><stop offset=".1" stop-color="#c79488"/><stop offset=".3" stop-color="#f8d2ca"/><stop offset=".45" stop-color="#d29e90"/><stop offset=".75" stop-color="#bb8a7c"/><stop offset="1" stop-color="#a47a70"/></linearGradient>
<linearGradient id="gring" x1="0" y1="0" x2="1" y2="0"><stop offset="0" stop-color="#9a7440"/><stop offset=".35" stop-color="#ae8449"/><stop offset=".62" stop-color="#b98a4c"/><stop offset=".75" stop-color="#e0b074"/><stop offset=".86" stop-color="#bd8d4f"/><stop offset="1" stop-color="#a0763e"/></linearGradient>
<linearGradient id="gringin" x1="0" y1="0" x2="1" y2="0"><stop offset="0" stop-color="#e9b9ac"/><stop offset=".3" stop-color="#c99888"/><stop offset=".7" stop-color="#e3b0a3"/><stop offset="1" stop-color="#b98a7c"/></linearGradient>
<clipPath id="cphole"><ellipse cx="1528" cy="564.700" rx="47.500" ry="26.200"/></clipPath>
</defs>
<defs><clipPath id="cpin"><ellipse cx="1528.3" cy="733.5" rx="81.0" ry="41.5"/></clipPath></defs>
<path d="M1432.8 733.0V753.0A95.5 49.3 0 0 0 1623.8 753.0V733.0Z" fill="url(#gring)"/>
<ellipse cx="1528.3" cy="733.0" rx="95.5" ry="49.3" fill="#b68a4e"/>
<path d="M1432.8 733.0A95.5 49.3 0 0 0 1623.8 733.0" fill="none" stroke="#9c733a" stroke-width=".9"/>
<g clip-path="url(#cpin)"><rect x="1445.3" y="689.5" width="166.0" height="87.0" fill="url(#gringin)"/><ellipse cx="1528.3" cy="753.0" rx="81.0" ry="41.5" fill="#fff"/><polygon points="1489.3,725.3 1450.3,712.9 1450.3,732.9 1489.3,745.3" fill="#cf9c90"/><polygon points="1489.3,725.3 1448.2,714.6 1460.9,704.2 1497.8,718.4" fill="#b68a4e" stroke="#b68a4e" stroke-width=".6"/><polygon points="1555.7,716.9 1578.7,696.4 1578.7,716.4 1555.7,736.9" fill="#cf9c90"/><polygon points="1541.9,712.8 1561.4,691.3 1582.2,697.5 1555.7,716.9" fill="#b68a4e" stroke="#b68a4e" stroke-width=".6"/></g>
<path d="M1476.0 623.9V749.5A49.0 26.5 0 0 0 1574.0 749.5V623.9Z" fill="url(#gshaft)"/>
<rect x="1476.0" y="682" width="4.500" height="42" fill="#b58a4c"/>
<g clip-path="url(#cpin)"><polygon points="1564.1,744.0 1607.3,752.1 1607.3,772.1 1564.1,764.0" fill="#cf9c90"/><polygon points="1569.6,736.3 1614.2,742.5 1605.9,754.0 1564.1,744.0" fill="#b68a4e" stroke="#b68a4e" stroke-width=".6"/><polygon points="1510.7,752.4 1483.6,771.5 1483.6,791.5 1510.7,772.4" fill="#cf9c90"/><polygon points="1510.7,752.4 1486.9,772.7 1467.5,765.4 1497.7,747.6" fill="#b68a4e" stroke="#b68a4e" stroke-width=".6"/></g>
<polygon points="1522.8,555.3 1527.6,538.8 1542.8,539.1 1546.0,555.9" fill="#ddaf73" stroke="#b08c5c" stroke-width=".6" stroke-linejoin="round"/>
<polygon points="1479.6,560.9 1477.8,544.1 1492.3,541.4 1501.6,556.9" fill="#cfa36a" stroke="#a58254" stroke-width=".6" stroke-linejoin="round"/>
<polygon points="1566.9,558.5 1577.5,543.5 1591.4,546.8 1588.1,563.5" fill="#e8b87a" stroke="#b99361" stroke-width=".6" stroke-linejoin="round"/>
<polygon points="1443.0,574.6 1435.0,558.7 1446.8,553.4 1460.9,566.6" fill="#c09660" stroke="#99784c" stroke-width=".6" stroke-linejoin="round"/>
<polygon points="1527.9,499.0 1539.7,499.3 1542.8,539.1 1527.6,538.8" fill="#b97e71" stroke="#94645a" stroke-width=".6" stroke-linejoin="round"/>
<polygon points="1524.6,518.1 1527.9,499.0 1527.6,538.8 1522.8,555.3" fill="#7a5c32" stroke="#614928" stroke-width=".6" stroke-linejoin="round"/>
<polygon points="1605.8,570.1 1620.8,557.7 1631.6,563.5 1622.3,578.9" fill="#e8b87a" stroke="#b99361" stroke-width=".6" stroke-linejoin="round"/>
<polygon points="1489.5,503.1 1500.7,501.1 1492.3,541.4 1477.8,544.1" fill="#af7569" stroke="#8c5d54" stroke-width=".6" stroke-linejoin="round"/>
<polygon points="1539.7,499.3 1541.2,518.5 1546.0,555.9 1542.8,539.1" fill="#7a5c32" stroke="#614928" stroke-width=".6" stroke-linejoin="round"/>
<polygon points="1500.7,501.1 1509.3,519.2 1501.6,556.9 1492.3,541.4" fill="#cfa369" stroke="#a58254" stroke-width=".6" stroke-linejoin="round"/>
<polygon points="1509.3,519.2 1524.6,518.1 1522.8,555.3 1501.6,556.9" fill="#7a5c32" stroke="#614928" stroke-width=".6" stroke-linejoin="round"/>
<polygon points="1566.5,502.6 1577.3,505.2 1591.4,546.8 1577.5,543.5" fill="#c5897c" stroke="#9d6d63" stroke-width=".6" stroke-linejoin="round"/>
<polygon points="1541.2,518.5 1556.2,520.4 1566.9,558.5 1546.0,555.9" fill="#917042" stroke="#745934" stroke-width=".6" stroke-linejoin="round"/>
<polygon points="1556.2,520.4 1566.5,502.6 1577.5,543.5 1566.9,558.5" fill="#7a5c32" stroke="#614928" stroke-width=".6" stroke-linejoin="round"/>
<polygon points="1493.5,522.1 1489.5,503.1 1477.8,544.1 1479.6,560.9" fill="#d7aa6f" stroke="#ac8858" stroke-width=".6" stroke-linejoin="round"/>
<polygon points="1577.3,505.2 1571.5,524.0 1588.1,563.5 1591.4,546.8" fill="#7a5c32" stroke="#614928" stroke-width=".6" stroke-linejoin="round"/>
<polygon points="1480.0,526.2 1493.5,522.1 1479.6,560.9 1460.9,566.6" fill="#7a5c32" stroke="#614928" stroke-width=".6" stroke-linejoin="round"/>
<polygon points="1571.5,524.0 1584.2,528.7 1605.8,570.1 1588.1,563.5" fill="#a27d4c" stroke="#81643c" stroke-width=".6" stroke-linejoin="round"/>
<polygon points="1465.5,510.3 1480.0,526.2 1460.9,566.6 1446.8,553.4" fill="#cfa36a" stroke="#a58254" stroke-width=".6" stroke-linejoin="round"/>
<polygon points="1456.4,514.4 1465.5,510.3 1446.8,553.4 1435.0,558.7" fill="#af7569" stroke="#8c5d54" stroke-width=".6" stroke-linejoin="round"/>
<polygon points="1584.2,528.7 1600.0,513.6 1620.8,557.7 1605.8,570.1" fill="#7a5c32" stroke="#614928" stroke-width=".6" stroke-linejoin="round"/>
<polygon points="1418.1,594.5 1404.9,580.7 1412.3,573.5 1429.3,583.5" fill="#b18a56" stroke="#8d6e44" stroke-width=".6" stroke-linejoin="round"/>
<polygon points="1600.0,513.6 1608.3,518.1 1631.6,563.5 1620.8,557.7" fill="#cb8f81" stroke="#a27267" stroke-width=".6" stroke-linejoin="round"/>
<polygon points="1467.2,531.9 1456.4,514.4 1435.0,558.7 1443.0,574.6" fill="#ddaf73" stroke="#b08c5c" stroke-width=".6" stroke-linejoin="round"/>
<polygon points="1541.2,518.5 1539.7,499.3 1527.9,499.0 1524.6,518.1" fill="#c69080" stroke="#9e7366" stroke-width=".6" stroke-linejoin="round"/>
<polygon points="1608.3,518.1 1596.1,535.1 1622.3,578.9 1631.6,563.5" fill="#7a5c32" stroke="#614928" stroke-width=".6" stroke-linejoin="round"/>
<polygon points="1634.4,588.5 1651.8,579.3 1658.0,586.9 1643.8,599.9" fill="#e8b87a" stroke="#b99361" stroke-width=".6" stroke-linejoin="round"/>
<polygon points="1457.3,538.4 1467.2,531.9 1443.0,574.6 1429.3,583.5" fill="#7a5c32" stroke="#614928" stroke-width=".6" stroke-linejoin="round"/>
<polygon points="1509.3,519.2 1500.7,501.1 1489.5,503.1 1493.5,522.1" fill="#c69080" stroke="#9e7366" stroke-width=".6" stroke-linejoin="round"/>
<polygon points="1571.5,524.0 1577.3,505.2 1566.5,502.6 1556.2,520.4" fill="#c69080" stroke="#9e7366" stroke-width=".6" stroke-linejoin="round"/>
<polygon points="1596.1,535.1 1604.8,541.9 1634.4,588.5 1622.3,578.9" fill="#a88250" stroke="#866840" stroke-width=".6" stroke-linejoin="round"/>
<polygon points="1438.9,525.8 1457.3,538.4 1429.3,583.5 1412.3,573.5" fill="#c39962" stroke="#9c7a4e" stroke-width=".6" stroke-linejoin="round"/>
<polygon points="1433.1,531.4 1438.9,525.8 1412.3,573.5 1404.9,580.7" fill="#af7569" stroke="#8c5d54" stroke-width=".6" stroke-linejoin="round"/>
<polygon points="1604.8,541.9 1623.9,530.3 1651.8,579.3 1634.4,588.5" fill="#8d6c3f" stroke="#705632" stroke-width=".6" stroke-linejoin="round"/>
<polygon points="1480.0,526.2 1465.5,510.3 1456.4,514.4 1467.2,531.9" fill="#c69080" stroke="#9e7366" stroke-width=".6" stroke-linejoin="round"/>
<polygon points="1449.2,546.2 1433.1,531.4 1404.9,580.7 1418.1,594.5" fill="#d7aa6f" stroke="#ac8858" stroke-width=".6" stroke-linejoin="round"/>
<polygon points="1596.1,535.1 1608.3,518.1 1600.0,513.6 1584.2,528.7" fill="#c69080" stroke="#9e7366" stroke-width=".6" stroke-linejoin="round"/>
<polygon points="1623.9,530.3 1628.7,536.2 1658.0,586.9 1651.8,579.3" fill="#cb8f81" stroke="#a27267" stroke-width=".6" stroke-linejoin="round"/>
<polygon points="1444.4,554.1 1449.2,546.2 1418.1,594.5 1411.3,605.4" fill="#d3a66c" stroke="#a88456" stroke-width=".6" stroke-linejoin="round"/>
<polygon points="1408.1,617.9 1391.6,607.1 1393.7,599.0 1411.3,605.4" fill="#a4804e" stroke="#83663e" stroke-width=".6" stroke-linejoin="round"/>
<polygon points="1628.7,536.2 1611.6,550.2 1643.8,599.9 1658.0,586.9" fill="#8a6a3d" stroke="#6e5430" stroke-width=".6" stroke-linejoin="round"/>
<polygon points="1611.6,550.2 1615.1,558.3 1648.8,611.2 1643.8,599.9" fill="#7a5c32" stroke="#614928" stroke-width=".6" stroke-linejoin="round"/>
<polygon points="1648.8,611.2 1666.2,605.6 1666.9,613.8 1649.9,623.7" fill="#e8b87a" stroke="#b99361" stroke-width=".6" stroke-linejoin="round"/>
<polygon points="1457.3,538.4 1438.9,525.8 1433.1,531.4 1449.2,546.2" fill="#c69080" stroke="#9e7366" stroke-width=".6" stroke-linejoin="round"/>
<polygon points="1424.4,545.5 1444.4,554.1 1411.3,605.4 1393.7,599.0" fill="#ac8653" stroke="#896b42" stroke-width=".6" stroke-linejoin="round"/>
<polygon points="1611.6,550.2 1628.7,536.2 1623.9,530.3 1604.8,541.9" fill="#c69080" stroke="#9e7366" stroke-width=".6" stroke-linejoin="round"/>
<polygon points="1615.1,558.3 1635.0,550.6 1666.2,605.6 1648.8,611.2" fill="#ac8653" stroke="#896b42" stroke-width=".6" stroke-linejoin="round"/>
<polygon points="1422.8,551.8 1424.4,545.5 1393.7,599.0 1391.6,607.1" fill="#e7aa9a" stroke="#b8887b" stroke-width=".6" stroke-linejoin="round"/>
<polygon points="1442.1,563.1 1422.8,551.8 1391.6,607.1 1408.1,617.9" fill="#c49a63" stroke="#9c7b4f" stroke-width=".6" stroke-linejoin="round"/>
<polygon points="1635.0,550.6 1635.6,557.0 1666.9,613.8 1666.2,605.6" fill="#af7569" stroke="#8c5d54" stroke-width=".6" stroke-linejoin="round"/>
<polygon points="1442.8,571.4 1442.1,563.1 1408.1,617.9 1409.1,629.4" fill="#e7b87a" stroke="#b89361" stroke-width=".6" stroke-linejoin="round"/>
<polygon points="1635.6,557.0 1615.9,567.3 1649.9,623.7 1666.9,613.8" fill="#ac8653" stroke="#896b42" stroke-width=".6" stroke-linejoin="round"/>
<polygon points="1615.9,567.3 1613.8,575.5 1646.9,635.2 1649.9,623.7" fill="#7a5c32" stroke="#614928" stroke-width=".6" stroke-linejoin="round"/>
<polygon points="1444.4,554.1 1424.4,545.5 1422.8,551.8 1442.1,563.1" fill="#c69080" stroke="#9e7366" stroke-width=".6" stroke-linejoin="round"/>
<polygon points="1414.5,641.6 1396.8,634.4 1393.3,626.3 1409.1,629.4" fill="#9c7949" stroke="#7c603a" stroke-width=".6" stroke-linejoin="round"/>
<polygon points="1615.9,567.3 1635.6,557.0 1635.0,550.6 1615.1,558.3" fill="#c69080" stroke="#9e7366" stroke-width=".6" stroke-linejoin="round"/>
<polygon points="1424.1,566.6 1442.8,571.4 1409.1,629.4 1393.3,626.3" fill="#8d6c3f" stroke="#705632" stroke-width=".6" stroke-linejoin="round"/>
<polygon points="1646.9,635.2 1662.0,632.9 1657.2,640.7 1639.6,647.1" fill="#deb073" stroke="#b18c5c" stroke-width=".6" stroke-linejoin="round"/>
<polygon points="1613.8,575.5 1631.8,571.7 1662.0,632.9 1646.9,635.2" fill="#c49a62" stroke="#9c7b4e" stroke-width=".6" stroke-linejoin="round"/>
<polygon points="1426.8,572.8 1424.1,566.6 1393.3,626.3 1396.8,634.4" fill="#eeb0a0" stroke="#be8c80" stroke-width=".6" stroke-linejoin="round"/>
<polygon points="1446.6,580.1 1426.8,572.8 1396.8,634.4 1414.5,641.6" fill="#a88351" stroke="#866840" stroke-width=".6" stroke-linejoin="round"/>
<polygon points="1452.9,587.8 1446.6,580.1 1414.5,641.6 1423.1,652.2" fill="#e8b87a" stroke="#b99361" stroke-width=".6" stroke-linejoin="round"/>
<polygon points="1631.8,571.7 1628.1,577.7 1657.2,640.7 1662.0,632.9" fill="#af7569" stroke="#8c5d54" stroke-width=".6" stroke-linejoin="round"/>
<polygon points="1442.8,571.4 1424.1,566.6 1426.8,572.8 1446.6,580.1" fill="#c69080" stroke="#9e7366" stroke-width=".6" stroke-linejoin="round"/>
<polygon points="1628.1,577.7 1608.5,584.1 1639.6,647.1 1657.2,640.7" fill="#c79d65" stroke="#9f7d50" stroke-width=".6" stroke-linejoin="round"/>
<polygon points="1608.5,584.1 1601.0,591.4 1629.2,657.2 1639.6,647.1" fill="#7a5c32" stroke="#614928" stroke-width=".6" stroke-linejoin="round"/>
<polygon points="1436.3,662.5 1419.8,658.7 1411.2,651.9 1423.1,652.2" fill="#997647" stroke="#7a5e38" stroke-width=".6" stroke-linejoin="round"/>
<polygon points="1608.5,584.1 1628.1,577.7 1631.8,571.7 1613.8,575.5" fill="#c69080" stroke="#9e7366" stroke-width=".6" stroke-linejoin="round"/>
<polygon points="1438.0,586.4 1452.9,587.8 1423.1,652.2 1411.2,651.9" fill="#7a5c32" stroke="#614928" stroke-width=".6" stroke-linejoin="round"/>
<polygon points="1629.2,657.2 1639.9,657.5 1630.2,663.8 1614.3,666.9" fill="#d0a46a" stroke="#a68354" stroke-width=".6" stroke-linejoin="round"/>
<polygon points="1601.0,591.4 1614.7,590.7 1639.9,657.5 1629.2,657.2" fill="#d1a46b" stroke="#a78355" stroke-width=".6" stroke-linejoin="round"/>
<polygon points="1473.3,601.1 1462.3,595.2 1436.3,662.5 1451.5,670.7" fill="#e8b87a" stroke="#b99361" stroke-width=".6" stroke-linejoin="round"/>
<polygon points="1462.3,595.2 1444.6,591.7 1419.8,658.7 1436.3,662.5" fill="#87673b" stroke="#6c522f" stroke-width=".6" stroke-linejoin="round"/>
<polygon points="1444.6,591.7 1438.0,586.4 1411.2,651.9 1419.8,658.7" fill="#eeb0a0" stroke="#be8c80" stroke-width=".6" stroke-linejoin="round"/>
<polygon points="1590.4,598.3 1578.5,603.6 1597.9,674.3 1614.3,666.9" fill="#977546" stroke="#785d38" stroke-width=".6" stroke-linejoin="round"/>
<polygon points="1452.9,587.8 1438.0,586.4 1444.6,591.7 1462.3,595.2" fill="#c69080" stroke="#9e7366" stroke-width=".6" stroke-linejoin="round"/>
<polygon points="1607.2,595.6 1590.4,598.3 1614.3,666.9 1630.2,663.8" fill="#d9ac70" stroke="#ad8959" stroke-width=".6" stroke-linejoin="round"/>
<polygon points="1614.7,590.7 1607.2,595.6 1630.2,663.8 1639.9,657.5" fill="#b67b6e" stroke="#916258" stroke-width=".6" stroke-linejoin="round"/>
<polygon points="1590.4,598.3 1607.2,595.6 1614.7,590.7 1601.0,591.4" fill="#c69080" stroke="#9e7366" stroke-width=".6" stroke-linejoin="round"/>
<polygon points="1470.6,677.8 1457.6,676.9 1445.0,672.3 1451.5,670.7" fill="#9c7949" stroke="#7c603a" stroke-width=".6" stroke-linejoin="round"/>
<polygon points="1501.1,609.5 1487.0,606.2 1470.6,677.8 1490.3,682.5" fill="#e7b779" stroke="#b89260" stroke-width=".6" stroke-linejoin="round"/>
<polygon points="1464.1,602.2 1473.3,601.1 1451.5,670.7 1445.0,672.3" fill="#7a5c32" stroke="#614928" stroke-width=".6" stroke-linejoin="round"/>
<polygon points="1597.9,674.3 1602.8,676.1 1589.5,680.1 1577.6,680.4" fill="#c09760" stroke="#99784c" stroke-width=".6" stroke-linejoin="round"/>
<polygon points="1563.9,608.0 1549.3,610.7 1557.3,684.1 1577.6,680.4" fill="#b68e5a" stroke="#917148" stroke-width=".6" stroke-linejoin="round"/>
<polygon points="1578.5,603.6 1586.0,605.1 1602.8,676.1 1597.9,674.3" fill="#d1a56b" stroke="#a78455" stroke-width=".6" stroke-linejoin="round"/>
<polygon points="1532.8,611.9 1517.4,611.6 1512.9,685.3 1534.3,685.8" fill="#d2a66c" stroke="#a88456" stroke-width=".6" stroke-linejoin="round"/>
<polygon points="1487.0,606.2 1473.9,605.8 1457.6,676.9 1470.6,677.8" fill="#7a5c32" stroke="#614928" stroke-width=".6" stroke-linejoin="round"/>
<polygon points="1473.3,601.1 1464.1,602.2 1473.9,605.8 1487.0,606.2" fill="#c69080" stroke="#9e7366" stroke-width=".6" stroke-linejoin="round"/>
<polygon points="1575.7,608.2 1563.9,608.0 1577.6,680.4 1589.5,680.1" fill="#dfb174" stroke="#b28d5c" stroke-width=".6" stroke-linejoin="round"/>
<polygon points="1473.9,605.8 1464.1,602.2 1445.0,672.3 1457.6,676.9" fill="#eeb0a0" stroke="#be8c80" stroke-width=".6" stroke-linejoin="round"/>
<polygon points="1512.9,685.3 1505.1,686.6 1490.2,684.7 1490.3,682.5" fill="#a5804e" stroke="#84663e" stroke-width=".6" stroke-linejoin="round"/>
<polygon points="1563.9,608.0 1575.7,608.2 1586.0,605.1 1578.5,603.6" fill="#c69080" stroke="#9e7366" stroke-width=".6" stroke-linejoin="round"/>
<polygon points="1557.3,684.1 1555.8,686.3 1540.6,687.4 1534.3,685.8" fill="#b18a56" stroke="#8d6e44" stroke-width=".6" stroke-linejoin="round"/>
<polygon points="1499.0,611.7 1501.1,609.5 1490.3,682.5 1490.2,684.7" fill="#7a5c32" stroke="#614928" stroke-width=".6" stroke-linejoin="round"/>
<polygon points="1586.0,605.1 1575.7,608.2 1589.5,680.1 1602.8,676.1" fill="#c78c7e" stroke="#9f7064" stroke-width=".6" stroke-linejoin="round"/>
<polygon points="1549.3,610.7 1549.7,613.0 1555.8,686.3 1557.3,684.1" fill="#c59b63" stroke="#9d7c4f" stroke-width=".6" stroke-linejoin="round"/>
<polygon points="1517.4,611.6 1510.5,613.2 1505.1,686.6 1512.9,685.3" fill="#7a5c32" stroke="#614928" stroke-width=".6" stroke-linejoin="round"/>
<polygon points="1538.0,613.9 1532.8,611.9 1534.3,685.8 1540.6,687.4" fill="#d9ab70" stroke="#ad8859" stroke-width=".6" stroke-linejoin="round"/>
<polygon points="1501.1,609.5 1499.0,611.7 1510.5,613.2 1517.4,611.6" fill="#c69080" stroke="#9e7366" stroke-width=".6" stroke-linejoin="round"/>
<polygon points="1532.8,611.9 1538.0,613.9 1549.7,613.0 1549.3,610.7" fill="#c69080" stroke="#9e7366" stroke-width=".6" stroke-linejoin="round"/>
<polygon points="1510.5,613.2 1499.0,611.7 1490.2,684.7 1505.1,686.6" fill="#e7a99a" stroke="#b8877b" stroke-width=".6" stroke-linejoin="round"/>
<polygon points="1549.7,613.0 1538.0,613.9 1540.6,687.4 1555.8,686.3" fill="#d99c8d" stroke="#ad7c70" stroke-width=".6" stroke-linejoin="round"/>
<ellipse cx="1529.0" cy="565.0" rx="88.0" ry="48.5" fill="#c38d7e"/>
<ellipse cx="1529.0" cy="565.0" rx="87.5" ry="48.5" fill="#c48f80" stroke="#a97a6c" stroke-width="0.8"/>
<ellipse cx="1528.0" cy="564.7" rx="75.0" ry="42.0" fill="#cf9788" stroke="#a87869" stroke-width="1"/>
<ellipse cx="1528.0" cy="564.7" rx="47.5" ry="26.2" fill="#b58679" stroke="#9b6f63" stroke-width="1"/>
<g clip-path="url(#cphole)"><rect x="1489" y="536" width="86" height="60" fill="url(#ghole)"/><ellipse cx="1530" cy="601" rx="30" ry="14" fill="#b49456"/><path d="M1480 538H1490V596H1480Z" fill="#a77c70"/></g>
</svg>
<div id="status" class="abs"></div>
<span class="t st" style="left:14px">273 items</span><span class="t st" style="left:85px">1 item selected  972 KB</span>
<i class="abs" style="left:74px;top:1182px;width:1px;height:12px;background:#e6e6e6"></i><i class="abs" style="left:215px;top:1182px;width:1px;height:12px;background:#e6e6e6"></i>
<div class="abs" style="left:1868px;top:1176px;width:24px;height:24px;background:#e5f3fb;border:1px solid #0a78d4"></div>
<svg style="left:1875px;top:1183px" width="13" height="12" viewBox="0 0 13 12"><path d="M.5 1.5H12.5M.5 4.5H12.5M.5 7.5H12.5M.5 10.5H12.5" stroke="#555" stroke-width="1"/></svg>
<svg style="left:1898px;top:1182px" width="13" height="13" viewBox="0 0 13 13"><rect x=".5" y=".5" width="11" height="9" fill="none" stroke="#555"/><path d="M0 11.5H12" stroke="#555"/></svg>
<div id="dlg" class="abs">
<div id="dtitle" class="abs"></div>
<span class="t" style="left:8px;top:9px;font-size:12px;letter-spacing:0;color:#111;transform:none">Folder Options</span>
<svg style="left:360px;top:9px" width="11" height="11" viewBox="0 0 11 11"><path d="M.6 .6L10.400 10.400M10.400 .6L.6 10.400" stroke="#222" stroke-width="1.1" fill="none"/></svg>
<div class="dtab" style="left:8px;top:39px;width:48px;height:19px"></div>
<div class="dtab" style="left:100px;top:39px;width:43px;height:19px"></div>
<div id="dpage" class="abs"></div>
<div class="dtab" style="left:55px;top:37px;width:46px;height:21px;background:#f9f9f9"></div>
<span class="t" style="left:13px;top:43px">General</span><span class="t" style="left:62.500px;top:41px">View</span><span class="t" style="left:105px;top:43px">Search</span>
<div class="abs" style="left:25px;top:73px;width:330px;height:82px;border:1px solid #dcdcdc"></div>
<i class="abs" style="left:31px;top:73px;width:66px;height:1px;background:#f9f9f9"></i>
<span class="t" style="left:34px;top:68px">Folder views</span>
<svg style="left:42px;top:92px" width="32" height="28" viewBox="0 0 32 28"><path d="M0 5.500Q0 4 1.500 4H9L11.500 6.500H26.500Q28 6.500 28 8V10H0Z" fill="#f0b323"/><rect x="0" y="7.500" width="28" height="19" rx="1.200" fill="url(#gfold)"/><rect x="15.500" y=".5" width="14.500" height="14.500" fill="#fdfdfd" stroke="#8c8c8c"/><g fill="#3fb0d6"><rect x="17.500" y="2.500" width="3" height="3"/><rect x="21.500" y="2.500" width="3" height="3"/><rect x="25.300" y="2.500" width="3" height="3"/></g><g fill="#4a84c8"><rect x="17.500" y="6.300" width="3" height="3"/><rect x="21.500" y="6.300" width="3" height="3"/><rect x="25.300" y="6.300" width="3" height="3"/></g><g fill="#5a62b8"><rect x="17.500" y="10.100" width="3" height="3"/><rect x="21.500" y="10.100" width="3" height="3"/><rect x="25.300" y="10.100" width="3" height="3"/></g></svg>
<span class="t" style="left:94px;top:83px;line-height:13px;transform:scaleX(.892)">You can apply this view (such as Details or Icons) to
all folders of this type.</span>
<div class="btn" style="left:95px;top:117px;width:114px;height:22px;background:#e0eef9;border:1px solid #0067c0;box-shadow:inset 0 0 0 .5px #0067c0;line-height:20px"><b>Apply to Folders</b></div>
<div class="btn" style="left:226px;top:117px;width:114px;height:22px;line-height:20px"><b>Reset Folders</b></div>
<span class="t" style="left:25px;top:174px">Advanced settings:</span>
<div class="abs" style="left:25px;top:189px;width:330px;height:195px;background:#fff;border:1px solid #7b8494"></div>
<div class="abs" style="left:337px;top:190px;width:17px;height:193px;background:#f0f0f0"></div>
<div class="abs" style="left:344px;top:313px;width:2px;height:52px;background:#858585;border-radius:1px"></div>
<i class="cb on" style="left:49px;top:192px"></i><svg style="left:49px;top:192px" width="13" height="13" viewBox="0 0 13 13"><path d="M3.200 7.100L5.400 9L9.900 4.400" fill="none" stroke="#e4eefa" stroke-width=".95" stroke-linecap="round" stroke-linejoin="round"/></svg>
<span class="li" style="left:67.500px;top:191px">Use Sharing Wizard (Recommended)</span>
<svg style="left:49px;top:209px" width="13" height="10" viewBox="0 0 13 10"><path d="M0 1Q0 .2 .8 .2H4L5.300 1.300H12.200Q13 1.300 13 2.100V3H0Z" fill="#f0b323"/><rect x="0" y="2" width="13" height="8" rx=".8" fill="url(#gfold)"/></svg>
<span class="li" style="left:67.500px;top:207px">When typing into list view</span>
<i class="abs" style="left:68px;top:224px;width:13px;height:13px;border-radius:50%;border:1px solid #7a7a7a;background:#f6f6f6"></i>
<span class="li" style="left:86.500px;top:223px">Automatically type into the Search Box</span>
<i class="abs" style="left:68px;top:240px;width:13px;height:13px;border-radius:50%;background:#1360c2"></i><i class="abs" style="left:72px;top:244px;width:5px;height:5px;border-radius:50%;background:#fff"></i>
<span class="li" style="left:86.500px;top:239px">Select the typed item in the view</span>
<svg style="left:31px;top:256px" width="12" height="13" viewBox="0 0 12 13"><rect x="0" y=".6" width="6" height="5.400" fill="#f7cf5e"/><rect x="0" y="0" width="3" height="1.500" fill="#e8a817"/><path d="M2.500 6V9.700H4.800" stroke="#a0a0a0" stroke-width=".9" fill="none"/><rect x="4.800" y="7.300" width="6.400" height="5.500" fill="#f7cf5e"/><rect x="4.800" y="6.500" width="3.200" height="1.500" fill="#e8a817"/></svg>
<span class="li" style="left:48.500px;top:255px">Navigation pane</span>
<i class="cb off" style="left:49px;top:272px"></i>
<span class="li" style="left:67.500px;top:271px">Always show availability status</span>
<i class="cb off" style="left:49px;top:288px"></i>
<span class="li" style="left:67.500px;top:287px">Expand to open folder</span>
<i class="cb off" style="left:49px;top:304px"></i>
<span class="li" style="left:67.500px;top:303px">Show all folders</span>
<i class="cb off" style="left:49px;top:320px"></i>
<span class="li" style="left:67.500px;top:319px">Show libraries</span>
<i class="cb on" style="left:49px;top:336px"></i><svg style="left:49px;top:336px" width="13" height="13" viewBox="0 0 13 13"><path d="M3.200 7.100L5.400 9L9.900 4.400" fill="none" stroke="#e4eefa" stroke-width=".95" stroke-linecap="round" stroke-linejoin="round"/></svg>
<span class="li" style="left:67.500px;top:335px">Show Network</span>
<i class="cb on" style="left:49px;top:352px"></i><svg style="left:49px;top:352px" width="13" height="13" viewBox="0 0 13 13"><path d="M3.200 7.100L5.400 9L9.900 4.400" fill="none" stroke="#e4eefa" stroke-width=".95" stroke-linecap="round" stroke-linejoin="round"/></svg>
<span class="li" style="left:67.500px;top:351px">Show This PC</span>
<div class="btn" style="left:251px;top:401px;width:103px;height:21px;line-height:19px"><b>Restore Defaults</b></div>
<div class="btn" style="left:138px;top:444px;width:72px;height:21px;line-height:19px"><b>OK</b></div>
<div class="btn" style="left:219px;top:444px;width:72px;height:21px;line-height:19px"><b>Cancel</b></div>
<div class="btn" style="left:300px;top:444px;width:72px;height:21px;line-height:19px;background:#f5f5f5;border-color:#e6e6e6;color:#a3a3a3"><b>Apply</b></div>
</div>
</body></html>
